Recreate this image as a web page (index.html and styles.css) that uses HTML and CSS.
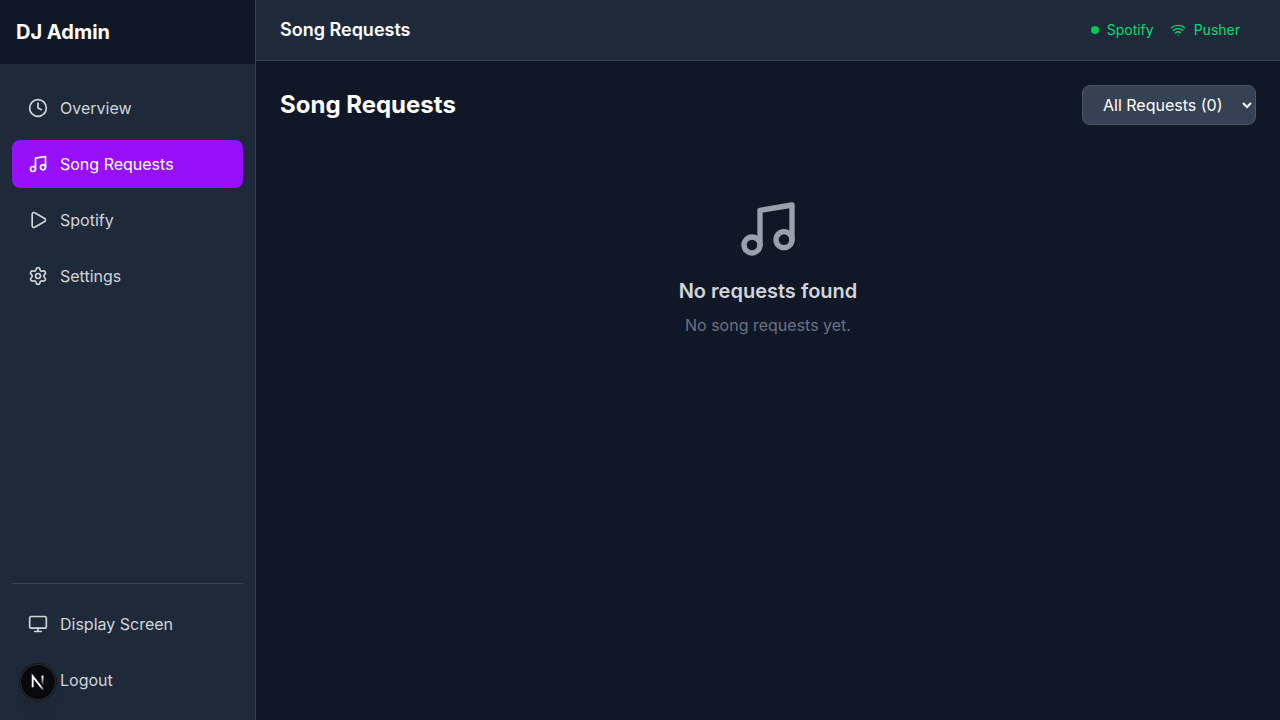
FILE: index.html
```html
<!DOCTYPE html>
<html lang="en">
<head>
<meta charset="utf-8">
<meta name="viewport" content="width=device-width, initial-scale=1">
<title>DJ Admin</title>
<link rel="stylesheet" href="styles.css">
</head>
<body>
<div class="app">
  <aside class="sidebar">
    <div class="brand"><h1 class="brand-name">DJ Admin</h1></div>
    <nav class="nav">
      <a class="nav-item" href="#overview">
        <svg class="icon" viewBox="0 0 24 24" aria-hidden="true"><circle cx="12" cy="12" r="10"/><path d="M12 6v6l4 2"/></svg>
        Overview
      </a>
      <a class="nav-item nav-item-active" href="#requests" aria-current="page">
        <svg class="icon" viewBox="0 0 24 24" aria-hidden="true"><path d="M9 18V5l12-2v13"/><circle cx="6" cy="18" r="3"/><circle cx="18" cy="16" r="3"/></svg>
        Song Requests
      </a>
      <a class="nav-item" href="#spotify">
        <svg class="icon" viewBox="0 0 24 24" aria-hidden="true"><path d="M5 5a2 2 0 0 1 3.008-1.728l11.997 6.998a2 2 0 0 1 .003 3.458l-12 7A2 2 0 0 1 5 19z"/></svg>
        Spotify
      </a>
      <a class="nav-item" href="#settings">
        <svg class="icon" viewBox="0 0 24 24" aria-hidden="true"><path d="M9.671 4.136a2.34 2.34 0 0 1 4.659 0 2.34 2.34 0 0 0 3.319 1.915 2.34 2.34 0 0 1 2.33 4.033 2.34 2.34 0 0 0 0 3.831 2.34 2.34 0 0 1-2.33 4.033 2.34 2.34 0 0 0-3.319 1.915 2.34 2.34 0 0 1-4.659 0 2.34 2.34 0 0 0-3.32-1.915 2.34 2.34 0 0 1-2.33-4.033 2.34 2.34 0 0 0 0-3.831A2.34 2.34 0 0 1 6.35 6.051a2.34 2.34 0 0 0 3.319-1.915"/><circle cx="12" cy="12" r="3"/></svg>
        Settings
      </a>
    </nav>
    <div class="sidebar-footer">
      <a class="nav-item" href="#display">
        <svg class="icon" viewBox="0 0 24 24" aria-hidden="true"><rect x="2" y="3" width="20" height="14" rx="2"/><path d="M8 21h8M12 17v4"/></svg>
        Display Screen
      </a>
      <button class="nav-item" type="button">
        <svg class="icon" viewBox="0 0 24 24" aria-hidden="true"><path d="m16 17 5-5-5-5M21 12H9M9 21H5a2 2 0 0 1-2-2V5a2 2 0 0 1 2-2h4"/></svg>
        Logout
      </button>
    </div>
  </aside>

  <div class="content">
    <header class="topbar">
      <h2 class="topbar-title">Song Requests</h2>
      <div class="statuses">
        <div class="status"><span class="status-dot"></span>Spotify</div>
        <div class="status">
          <svg class="icon icon-small" viewBox="0 0 24 24" aria-hidden="true"><path d="M12 20h.01M2 8.82a15 15 0 0 1 20 0M5 12.859a10 10 0 0 1 14 0M8.5 16.429a5 5 0 0 1 7 0"/></svg>
          Pusher
        </div>
      </div>
    </header>
    <main class="main">
      <div class="page-head">
        <h2 class="page-title">Song Requests</h2>
        <select class="filter" aria-label="Filter requests">
          <option>All Requests (0)</option>
        </select>
      </div>
      <div class="empty">
        <svg class="icon icon-large" viewBox="0 0 24 24" aria-hidden="true"><path d="M9 18V5l12-2v13"/><circle cx="6" cy="18" r="3"/><circle cx="18" cy="16" r="3"/></svg>
        <h3 class="empty-title">No requests found</h3>
        <p class="empty-text">No song requests yet.</p>
      </div>
    </main>
  </div>
</div>

<button class="dev-badge" type="button" aria-label="Open dev tools">
  <svg class="dev-logo" viewBox="0 0 40 40" fill="none" aria-hidden="true">
    <defs>
      <linearGradient id="fade-diagonal" gradientUnits="userSpaceOnUse" x1="9.2" y1="9.9" x2="13" y2="14.8">
        <stop stop-color="#fff"/><stop offset="1" stop-color="#fff" stop-opacity="0.2"/>
      </linearGradient>
      <linearGradient id="fade-stem" gradientUnits="userSpaceOnUse" x1="11.82" y1="1.4" x2="11.79" y2="10.5">
        <stop stop-color="#fff"/><stop offset="1" stop-color="#fff" stop-opacity="0"/>
      </linearGradient>
    </defs>
    <g transform="translate(11.4 12.4) scale(1.15)" stroke-width="1.86">
      <path d="M12.4 14 2.34 1V11.6" stroke="url(#fade-diagonal)"/>
      <path d="M11.825 .4V11.6" stroke="url(#fade-stem)"/>
    </g>
  </svg>
</button>
</body>
</html>
```
FILE: styles.css
```css
* {
  box-sizing: border-box;
  margin: 0;
}

body {
  background: #101828;
  color: #fff;
  font-family: Inter, "Liberation Sans", sans-serif;
  font-size: 16px;
  line-height: 24px;
}

.app {
  display: flex;
  min-height: 100vh;
}

.icon {
  width: 20px;
  height: 20px;
  flex-shrink: 0;
  fill: none;
  stroke: currentColor;
  stroke-width: 2;
  stroke-linecap: round;
  stroke-linejoin: round;
}

.icon-small {
  width: 16px;
  height: 16px;
}

.icon-large {
  width: 64px;
  height: 64px;
}

/* Sidebar */
.sidebar {
  display: flex;
  flex-direction: column;
  flex: 0 0 256px;
  background: #1e2939;
  border-right: 1px solid #364153;
}

.brand {
  display: flex;
  align-items: center;
  height: 64px;
  padding: 0 16px;
  background: #101828;
}

.brand-name {
  font-size: 20px;
  line-height: 28px;
  font-weight: 700;
}

.nav {
  display: flex;
  flex-direction: column;
  gap: 8px;
  flex: 1;
  padding: 20px 12px;
}

.nav-item {
  display: flex;
  align-items: center;
  gap: 12px;
  padding: 12px 16px;
  border: 0;
  border-radius: 8px;
  background: none;
  color: #d1d5dc;
  font: inherit;
  text-align: left;
  text-decoration: none;
  cursor: pointer;
}

.nav-item-active {
  background: #9810fa;
  color: #fff;
}

.sidebar-footer {
  display: flex;
  flex-direction: column;
  gap: 8px;
  margin: 0 12px;
  padding: 16px 0;
  border-top: 1px solid #364153;
}

/* Content */
.content {
  display: flex;
  flex-direction: column;
  flex: 1;
  min-width: 0;
}

.topbar {
  display: flex;
  align-items: center;
  justify-content: space-between;
  padding: 16px 40px 16px 24px;
  background: #1e2939;
  border-bottom: 1px solid #364153;
}

.topbar-title {
  font-size: 18px;
  line-height: 28px;
  font-weight: 600;
}

.statuses {
  display: flex;
  gap: 16px;
}

.status {
  display: flex;
  align-items: center;
  gap: 8px;
  color: #05df72;
  font-size: 14px;
  line-height: 20px;
}

.status-dot {
  width: 8px;
  height: 8px;
  border-radius: 50%;
  background: #00c950;
}

.main {
  flex: 1;
  padding: 24px;
}

.page-head {
  display: flex;
  align-items: center;
  justify-content: space-between;
  margin-bottom: 24px;
}

.page-title {
  font-size: 24px;
  line-height: 32px;
  font-weight: 700;
}

.filter {
  height: 40px;
  padding: 8px 16px;
  border: 1px solid #4a5565;
  border-radius: 8px;
  background-color: #364153;
  color: #fff;
  font: inherit;
}

.empty {
  display: flex;
  flex-direction: column;
  align-items: center;
  padding: 48px 0;
  color: #99a1af;
  text-align: center;
}

.empty-title {
  margin: 16px 0 8px;
  color: #d1d5dc;
  font-size: 20px;
  line-height: 28px;
  font-weight: 600;
}

.empty-text {
  color: #6a7282;
}

/* Floating developer badge */
.dev-badge {
  position: fixed;
  left: 20px;
  bottom: 20px;
  width: 36px;
  height: 36px;
  padding: 0;
  border: 0;
  border-radius: 50%;
  background: #08090c;
  box-shadow: 0 0 0 1px #171717, inset 0 0 0 1px rgba(255, 255, 255, 0.14), 0 16px 32px -8px rgba(0, 0, 0, 0.24);
  cursor: pointer;
}

.dev-logo {
  display: block;
  width: 36px;
  height: 36px;
}
```
